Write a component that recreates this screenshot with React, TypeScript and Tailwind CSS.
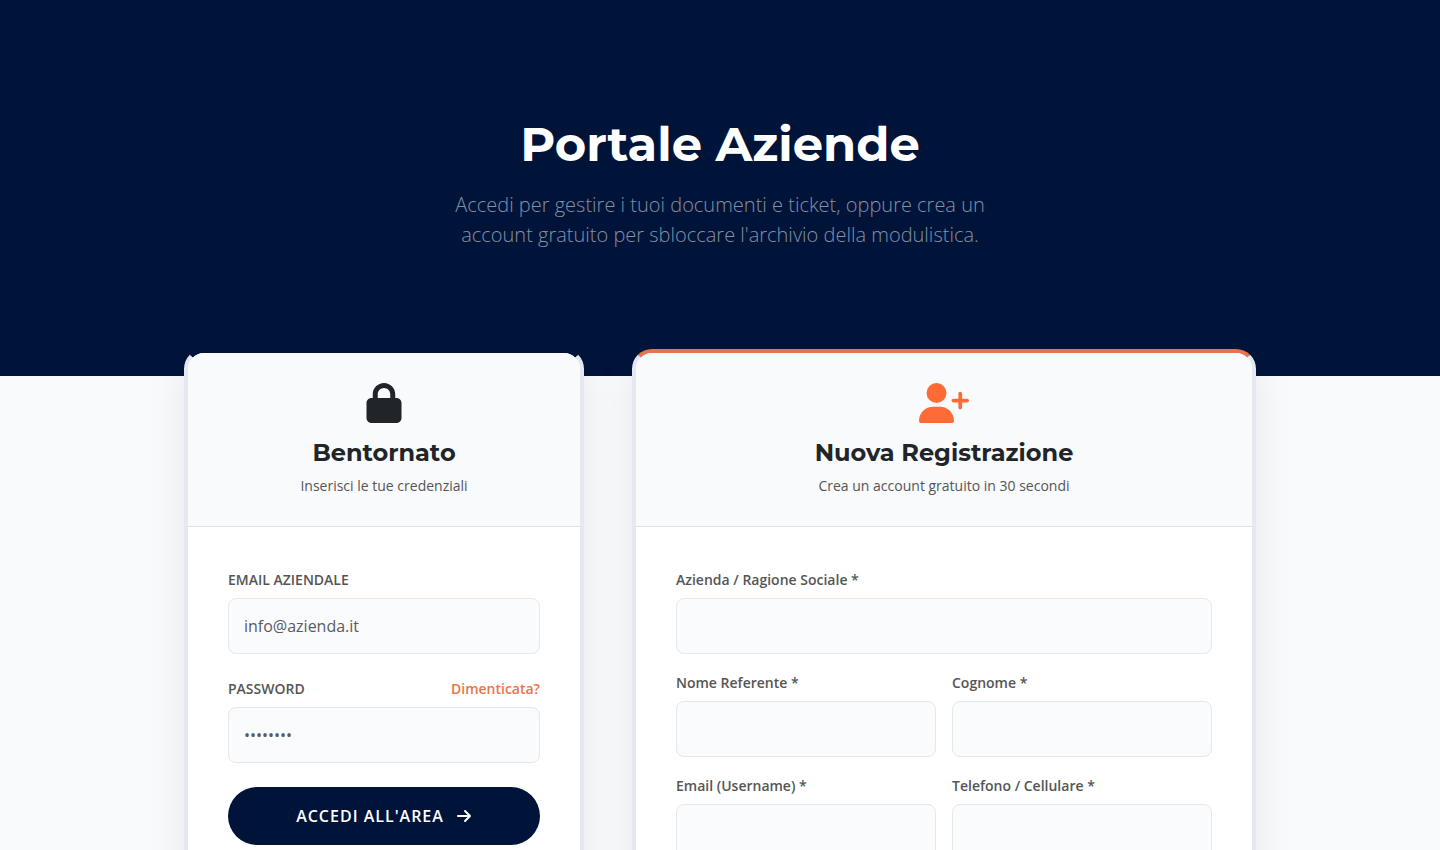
import React from 'react';
import clsx from 'clsx';
import { FaArrowRight, FaLock, FaUserPlus } from 'react-icons/fa6';

type FieldPropsType = {
  id: string;
  label: string;
  type?: string;
  placeholder?: string;
  children?: React.ReactNode;
};

type CardPropsType = {
  title: string;
  subtitle: string;
  icon: React.ReactNode;
  className: string;
  children: React.ReactNode;
};

function Field({ id, label, type = 'text', placeholder, children }: FieldPropsType) {
  return (
    <div>
      <div className="flex items-center justify-between mb-1.5 text-sm leading-[25px] font-semibold">
        <label htmlFor={id} className="text-[#555]">
          {label}
        </label>
        {children}
      </div>
      <input
        id={id}
        type={type}
        placeholder={placeholder}
        className="block w-full h-14 px-[15px] text-base text-[#212529] placeholder:text-[#595c5f] bg-[#f9fbfd] border border-[#e2e8ec] rounded-lg outline-none focus:border-[#ff6b35]"
      />
    </div>
  );
}

function Card({ title, subtitle, icon, className, children }: CardPropsType) {
  return (
    <section
      className={clsx(
        'h-full bg-white border-4 border-[#e4e8f0] rounded-[20px] overflow-hidden shadow-[0_10px_40px_rgba(0,22,57,0.08)]',
        className,
      )}
    >
      <header className="flex flex-col items-center py-[30px] px-10 text-center bg-[#f8fafc] border-b border-[#dee2e6]">
        {icon}
        <h2 className="mt-[15px] font-[Montserrat,Inter,sans-serif] text-2xl leading-[30px] font-bold text-[#212529]">
          {title}
        </h2>
        <p className="mt-[7px] text-sm leading-[21px] text-[#555]">{subtitle}</p>
      </header>
      <div className="p-10">{children}</div>
    </section>
  );
}

export default function App() {
  return (
    <div className="min-h-screen bg-[#f8fafc] font-['Open_Sans',sans-serif]">
      <div className="px-6 pt-[114px] pb-[126px] text-center bg-[#001439]">
        <h1 className="font-[Montserrat,Inter,sans-serif] text-5xl leading-[60px] font-bold text-white">
          Portale Aziende
        </h1>
        <p className="max-w-[600px] mx-auto mt-4 text-xl leading-[30px] font-light text-[#8490a6]">
          Accedi per gestire i tuoi documenti e ticket, oppure crea un account
          gratuito per sbloccare l'archivio della modulistica.
        </p>
      </div>

      <main className="relative max-w-[1120px] mx-auto -mt-[27px] pb-20 flex flex-wrap gap-y-12">
        <div className="w-full px-6 lg:w-2/5">
          <Card
            title="Bentornato"
            subtitle="Inserisci le tue credenziali"
            icon={<FaLock className="w-9 h-10 text-[#212529]" />}
            className="border-t-[#001439]"
          >
            <form>
              <div className="flex flex-col gap-[22px]">
                <Field
                  id="login-email"
                  label="EMAIL AZIENDALE"
                  type="email"
                  placeholder="info@azienda.it"
                />
                <Field
                  id="login-password"
                  label="PASSWORD"
                  type="password"
                  placeholder="••••••••"
                >
                  <a href="#" className="text-[#e8744a]">
                    Dimenticata?
                  </a>
                </Field>
              </div>
              <button
                type="submit"
                className="flex items-center justify-center gap-3 w-full h-[58px] mt-6 text-base font-semibold tracking-[1px] text-white bg-[#001439] rounded-full"
              >
                ACCEDI ALL'AREA
                <FaArrowRight />
              </button>
            </form>
          </Card>
        </div>

        <div className="w-full px-6 lg:w-3/5">
          <Card
            title="Nuova Registrazione"
            subtitle="Crea un account gratuito in 30 secondi"
            icon={<FaUserPlus className="w-[50px] h-10 text-[#ff6b35]" />}
            className="border-t-[#e8744a]"
          >
            <form className="grid grid-cols-2 gap-4">
              <div className="col-span-2">
                <Field id="company" label="Azienda / Ragione Sociale *" />
              </div>
              <Field id="first-name" label="Nome Referente *" />
              <Field id="last-name" label="Cognome *" />
              <Field id="email" label="Email (Username) *" type="email" />
              <Field id="phone" label="Telefono / Cellulare *" type="tel" />
            </form>
          </Card>
        </div>
      </main>
    </div>
  );
}
